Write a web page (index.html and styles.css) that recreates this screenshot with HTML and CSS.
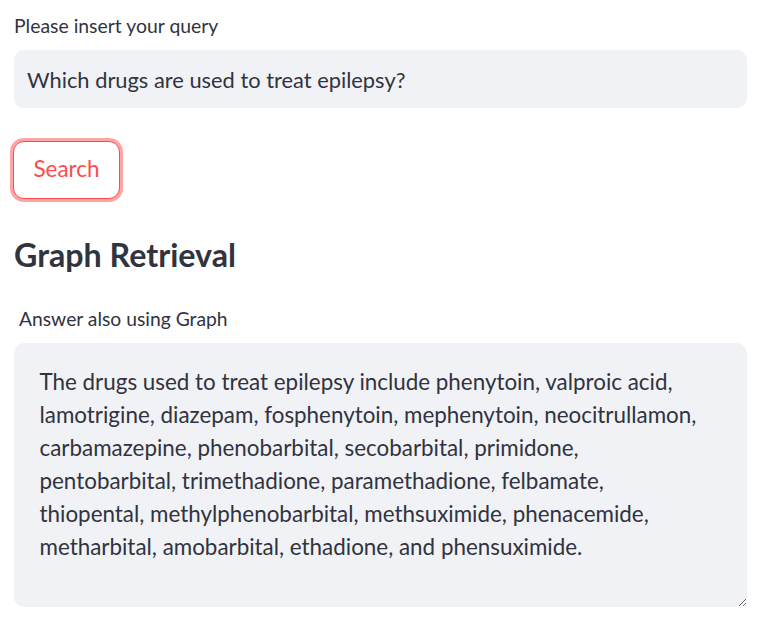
FILE: index.html
```html
<!DOCTYPE html>
<html lang="en">
<head>
<meta charset="utf-8">
<title>Graph Retrieval</title>
<link rel="stylesheet" href="styles.css">
</head>
<body>
<main class="app">
  <section class="field">
    <label class="field-label" for="query">Please insert your query</label>
    <input id="query" class="text-input" type="text" value="Which drugs are used to treat epilepsy?">
  </section>

  <div class="actions">
    <button class="btn-search" type="button">Search</button>
  </div>

  <h2 class="section-title">Graph Retrieval</h2>

  <section class="field">
    <label class="field-label field-label--answer" for="answer">Answer also using Graph</label>
    <textarea id="answer" class="text-area">The drugs used to treat epilepsy include phenytoin, valproic acid, lamotrigine, diazepam, fosphenytoin, mephenytoin, neocitrullamon, carbamazepine, phenobarbital, secobarbital, primidone, pentobarbital, trimethadione, paramethadione, felbamate, thiopental, methylphenobarbital, methsuximide, phenacemide, metharbital, amobarbital, ethadione, and phensuximide.</textarea>
  </section>
</main>
</body>
</html>
```
FILE: styles.css
```css
* { box-sizing: border-box; }

html, body {
  margin: 0;
  padding: 0;
  background: #ffffff;
}

body {
  font-family: "Lato", "Noto Sans", sans-serif;
  color: #31333f;
}

.app {
  width: 733px;
  margin-left: 14px;
  padding-top: 14px;
  display: flex;
  flex-direction: column;
}

.field {
  display: flex;
  flex-direction: column;
  gap: 12px;
}

.field-label {
  font-size: 19.4px;
  line-height: 24px;
  color: #31333f;
}

.field-label--answer {
  padding-left: 5px;
  font-size: 19.3px;
}

.text-input {
  display: block;
  width: 100%;
  height: 58px;
  border: none;
  border-radius: 10px;
  background: #f0f2f6;
  padding: 0 13px;
  font-family: "Lato", "Noto Sans", sans-serif;
  font-size: 21.85px;
  color: #31333f;
  outline: none;
}

.actions {
  margin-top: 33px;
  display: flex;
}

.btn-search {
  margin-left: -1px;
  width: 107px;
  height: 58px;
  padding: 0 0 3px 0;
  border: 1px solid #ff4b4b;
  border-radius: 11px;
  background: #ffffff;
  box-shadow: 0 0 0 3px rgba(255, 75, 75, 0.5);
  color: #ff4b4b;
  font-family: "Lato", "Noto Sans", sans-serif;
  font-size: 22.4px;
  cursor: pointer;
}

.section-title {
  margin: 37px 0 32px 0;
  font-size: 32.2px;
  line-height: 38.6px;
  font-weight: 700;
  color: #31333f;
}

.text-area {
  display: block;
  width: 100%;
  height: 264px;
  border: none;
  border-radius: 10px;
  background: #f0f2f6;
  padding: 22px 40px 22px 25.5px;
  font-family: "Lato", "Noto Sans", sans-serif;
  font-size: 22.4px;
  line-height: 33px;
  color: #31333f;
  resize: vertical;
  outline: none;
  overflow: hidden;
}
```
